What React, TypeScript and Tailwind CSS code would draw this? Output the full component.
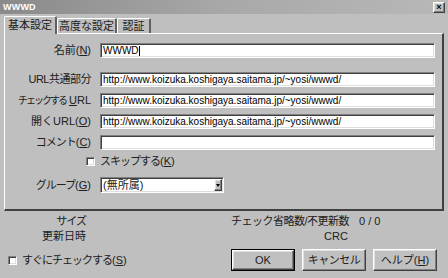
import React from "react";

const font = "font-['Liberation_Sans','Noto_Sans_CJK_JP',sans-serif]";
const raised =
  "border border-t-white border-l-white border-r-[#404040] border-b-[#404040] shadow-[inset_-1px_-1px_#808080,inset_1px_1px_#dfdfdf]";
const sunken =
  "border border-t-[#808080] border-l-[#808080] border-r-white border-b-white shadow-[inset_1px_1px_#404040,inset_-1px_-1px_#dfdfdf]";

const URL = "http://www.koizuka.koshigaya.saitama.jp/~yosi/wwwd/";

const Acc: React.FC<{ k: string }> = ({ k }) => (
  <span>
    (<span className="underline">{k}</span>)
  </span>
);

const Field: React.FC<{ label: React.ReactNode; value?: string; cursor?: boolean; className?: string }> = ({
  label,
  value,
  cursor,
  className,
}) => (
  <div className={`flex items-center h-[15px] ${className ?? ""}`}>
    <div className="w-[85px] flex justify-end items-center whitespace-nowrap">{label}</div>
    <div className={`ml-[9px] w-[335px] h-[15px] bg-white ${sunken} flex items-center pl-[2px]`}>
      <span className="text-[10px] leading-none text-black font-['Liberation_Sans',sans-serif] whitespace-nowrap">
        {value}
      </span>
      {cursor && <span className="w-px h-[10px] bg-black" />}
    </div>
  </div>
);

const Check: React.FC = () => <span className={`w-[9px] h-[9px] bg-white ${sunken} inline-block`} />;

const Button: React.FC<{ children: React.ReactNode; def?: boolean }> = ({ children, def }) => (
  <div className={`w-[64px] h-[22px] ${def ? "border border-black" : ""}`}>
    <div className={`w-full h-full bg-[#c0c0c0] ${raised} flex items-center justify-center text-[#202020] whitespace-nowrap`}>
      {children}
    </div>
  </div>
);

const tab = "border-t border-l border-white border-r-2 border-r-[#606060] rounded-t-[2px] flex items-center justify-center whitespace-nowrap";

export default function App() {
  return (
    <div className={`w-[448px] h-[278px] bg-[#bfbfbf] flex flex-col text-[11px] leading-none text-[#202020] ${font}`}>
      {/* title bar */}
      <div className="h-[14px] flex items-center pl-[3px] pr-[3px] bg-gradient-to-r from-[#8a8a8a] via-[#a8a8a8] to-[#b8b8b8]">
        <span className="text-white font-bold text-[9px] font-['Liberation_Sans',sans-serif] tracking-[0.2px]">WWWD</span>
        <div className={`ml-auto w-[12px] h-[11px] bg-[#c0c0c0] ${raised} flex items-center justify-center`}>
          <span className="text-[9px] font-bold leading-none text-black">×</span>
        </div>
      </div>

      {/* tabs */}
      <div className="flex items-end h-[19px] pl-[4px]">
        <div className={`h-[18px] w-[53px] -mb-px bg-[#bfbfbf] relative z-10 ${tab}`}>基本設定</div>
        <div className={`h-[15px] w-[60px] ${tab}`}>高度な設定</div>
        <div className={`h-[15px] w-[34px] ${tab}`}>認証</div>
      </div>

      {/* panel */}
      <div className="ml-[4px] w-[440px] h-[178px] border-t border-l border-white border-r-2 border-b-2 border-r-[#404040] border-b-[#404040] pt-[9px] pl-[1px] flex flex-col">
        <Field label={<>名前<Acc k="N" /></>} value="WWWD" cursor />
        <Field className="mt-[14px]" label={<span className="tracking-[-0.5px]">URL共通部分</span>} value={URL} />
        <Field
          className="mt-[6px]"
          label={
            <>
              <span className="text-[10px] tracking-[-2px]">チェックする</span>
              <span className="ml-[3px] underline">U</span>RL
            </>
          }
          value={URL}
        />
        <Field className="mt-[6px]" label={<>開くURL<Acc k="O" /></>} value={URL} />
        <Field className="mt-[6px]" label={<><span className="tracking-[-1px]">コメント</span><Acc k="C" /></>} />
        <div className="flex items-center h-[18px] mt-[2px] pl-[80px] gap-[5px]">
          <Check />
          <span><span className="tracking-[-1px]">スキップする</span><Acc k="K" /></span>
        </div>
        <div className="flex items-center h-[16px] mt-[7px]">
          <div className="w-[85px] text-right"><span className="tracking-[-1px]">グループ</span><Acc k="G" /></div>
          <div className={`ml-[9px] w-[124px] h-[16px] bg-white ${sunken} flex items-center pl-[2px] pr-px`}>
            <span className="flex-1">(無所属)</span>
            <div className={`w-[8px] h-[12px] bg-[#c0c0c0] ${raised} flex items-center justify-center`}>
              <svg width="4" height="3" viewBox="0 0 4 3">
                <path d="M0 0h4L2 3z" fill="#000" />
              </svg>
            </div>
          </div>
        </div>
      </div>

      {/* info */}
      <div className="flex mt-[3px]">
        <div className="w-[86px] flex flex-col items-end">
          <div className="h-[15px] flex items-center tracking-[-1px]">サイズ</div>
          <div className="h-[15px] flex items-center">更新日時</div>
        </div>
        <div className="ml-[145px] flex flex-col">
          <div className="h-[15px] flex items-center whitespace-nowrap">
            <span className="tracking-[-0.5px]">チェック省略数/不更新数</span>
            <span className="ml-[10px] font-['Liberation_Sans',sans-serif]">0 / 0</span>
          </div>
          <div className="h-[15px] flex items-center pl-[93px] font-['Liberation_Sans',sans-serif]">CRC</div>
        </div>
      </div>

      {/* buttons */}
      <div className="flex items-center mt-[5px] pl-[8px]">
        <Check />
        <span className="ml-[5px]"><span className="tracking-[-1px]">すぐにチェックする</span><Acc k="S" /></span>
        <div className="ml-auto mr-[11px] flex gap-[7px]">
          <Button def>OK</Button>
          <Button><span className="tracking-[-0.5px]">キャンセル</span></Button>
          <Button>ヘルプ<Acc k="H" /></Button>
        </div>
      </div>
    </div>
  );
}
